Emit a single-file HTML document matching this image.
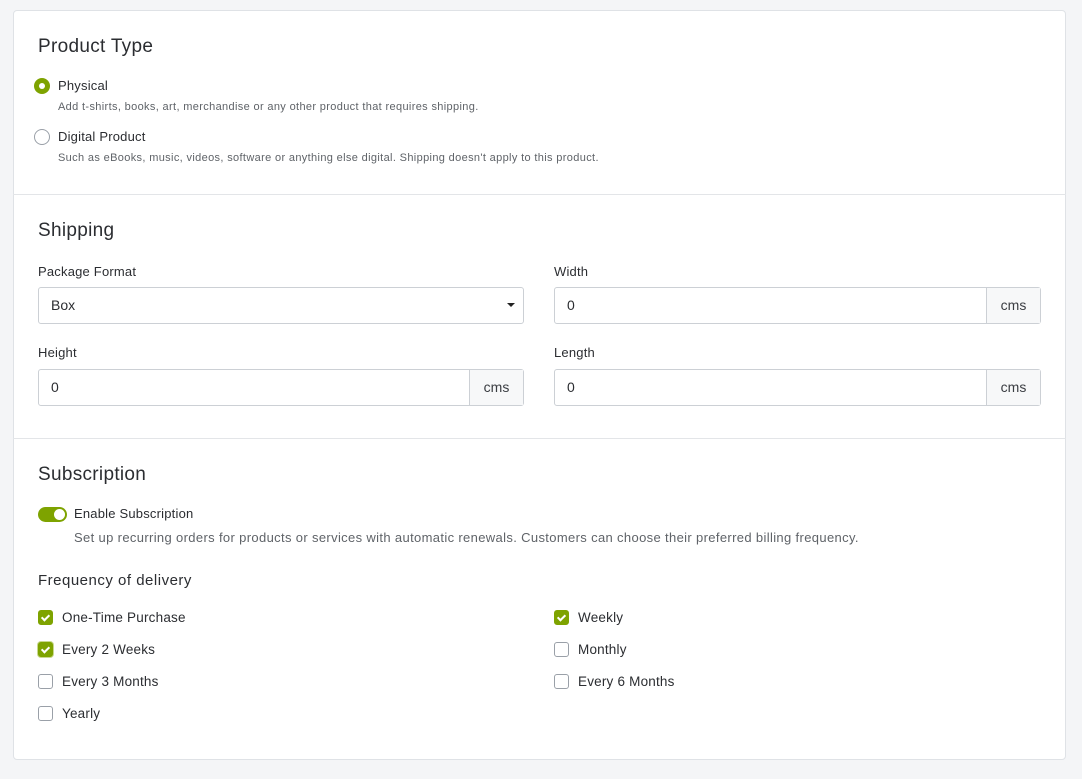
<!DOCTYPE html>
<html><head><style>
*{box-sizing:border-box;margin:0;padding:0}
body{width:1082px;height:779px;background:#f4f5f7;font-family:"Liberation Sans",sans-serif;color:#2b2d31;position:relative;overflow:hidden}
.card{position:absolute;left:13px;top:10px;width:1053px;height:750px;background:#fff;border:1px solid #dfe2e6;border-radius:4px}
.a{position:absolute;white-space:nowrap}
.h{font-size:19px;letter-spacing:0.3px;color:#2b2d31}
.l{font-size:13px;letter-spacing:0.2px}
.d{font-size:11px;letter-spacing:0.35px;color:#5f6368}
.hr{position:absolute;left:13px;width:1053px;height:1px;background:#e3e5e8}
.inp{position:absolute;height:37px;border:1px solid #ccd0d5;border-radius:3px;font-size:14px;padding:0 12px;line-height:35px;background:#fff}
.add{position:absolute;right:0;top:0;bottom:0;width:54px;border-left:1px solid #ccd0d5;background:#f7f8f9;text-align:center;font-size:14px;color:#3a3d42}
.cb{position:absolute;width:15px;height:15px;border:1px solid #9aa0a8;border-radius:3px;background:#fff}
.cb.on{background:#7ea300;border-color:#7ea300}
.cb.on:after{content:"";position:absolute;left:4px;top:2px;width:3px;height:6px;border:solid #fff;border-width:0 2px 2px 0;transform:rotate(45deg)}
.c{font-size:13.5px;letter-spacing:0.2px}
</style></head><body>
<div class="card"></div>
<div class="a h" style="left:38px;top:36px">Product Type</div>
<div class="a" style="left:34px;top:78px;width:16px;height:16px;border-radius:50%;background:#7ea300"><div style="position:absolute;left:5px;top:5px;width:6px;height:6px;border-radius:50%;background:#fff"></div></div>
<div class="a l" style="left:58px;top:78px">Physical</div>
<div class="a d" style="left:58px;top:101px">Add t-shirts, books, art, merchandise or any other product that requires shipping.</div>
<div class="a" style="left:34px;top:129px;width:16px;height:16px;border-radius:50%;border:1px solid #9aa0a8;background:#fff"></div>
<div class="a l" style="left:58px;top:129px">Digital Product</div>
<div class="a d" style="left:58px;top:152px">Such as eBooks, music, videos, software or anything else digital. Shipping doesn't apply to this product.</div>
<div class="hr" style="top:194px"></div>
<div class="a h" style="left:38px;top:220px">Shipping</div>
<div class="a l" style="left:38px;top:264px">Package Format</div>
<div class="inp" style="left:38px;top:287px;width:486px">Box<span style="position:absolute;right:8px;top:15px;border:4px solid transparent;border-top:4px solid #222;border-bottom:0"></span></div>
<div class="a l" style="left:554px;top:264px">Width</div>
<div class="inp" style="left:554px;top:287px;width:487px">0<div class="add">cms</div></div>
<div class="a l" style="left:38px;top:345px">Height</div>
<div class="inp" style="left:38px;top:369px;width:486px">0<div class="add">cms</div></div>
<div class="a l" style="left:554px;top:345px">Length</div>
<div class="inp" style="left:554px;top:369px;width:487px">0<div class="add">cms</div></div>
<div class="hr" style="top:438px"></div>
<div class="a h" style="left:38px;top:464px">Subscription</div>
<div class="a" style="left:38px;top:507px;width:29px;height:15px;border-radius:8px;background:#7ea300"><div style="position:absolute;right:2px;top:2px;width:11px;height:11px;border-radius:50%;background:#fff"></div></div>
<div class="a l" style="left:74px;top:506px">Enable Subscription</div>
<div class="a" style="left:74px;top:530px;font-size:13px;letter-spacing:0.35px;color:#5f6368">Set up recurring orders for products or services with automatic renewals. Customers can choose their preferred billing frequency.</div>
<div class="a" style="left:38px;top:572px;font-size:15px;letter-spacing:0.5px">Frequency of delivery</div>
<div class="cb on" style="left:38px;top:610px"></div><div class="a c" style="left:62px;top:610px">One-Time Purchase</div>
<div class="cb on" style="left:38px;top:642px;box-shadow:0 0 0 1px #c9d98f"></div><div class="a c" style="left:62px;top:642px">Every 2 Weeks</div>
<div class="cb" style="left:38px;top:674px"></div><div class="a c" style="left:62px;top:674px">Every 3 Months</div>
<div class="cb" style="left:38px;top:706px"></div><div class="a c" style="left:62px;top:706px">Yearly</div>
<div class="cb on" style="left:554px;top:610px"></div><div class="a c" style="left:578px;top:610px">Weekly</div>
<div class="cb" style="left:554px;top:642px"></div><div class="a c" style="left:578px;top:642px">Monthly</div>
<div class="cb" style="left:554px;top:674px"></div><div class="a c" style="left:578px;top:674px">Every 6 Months</div>
</body></html>
